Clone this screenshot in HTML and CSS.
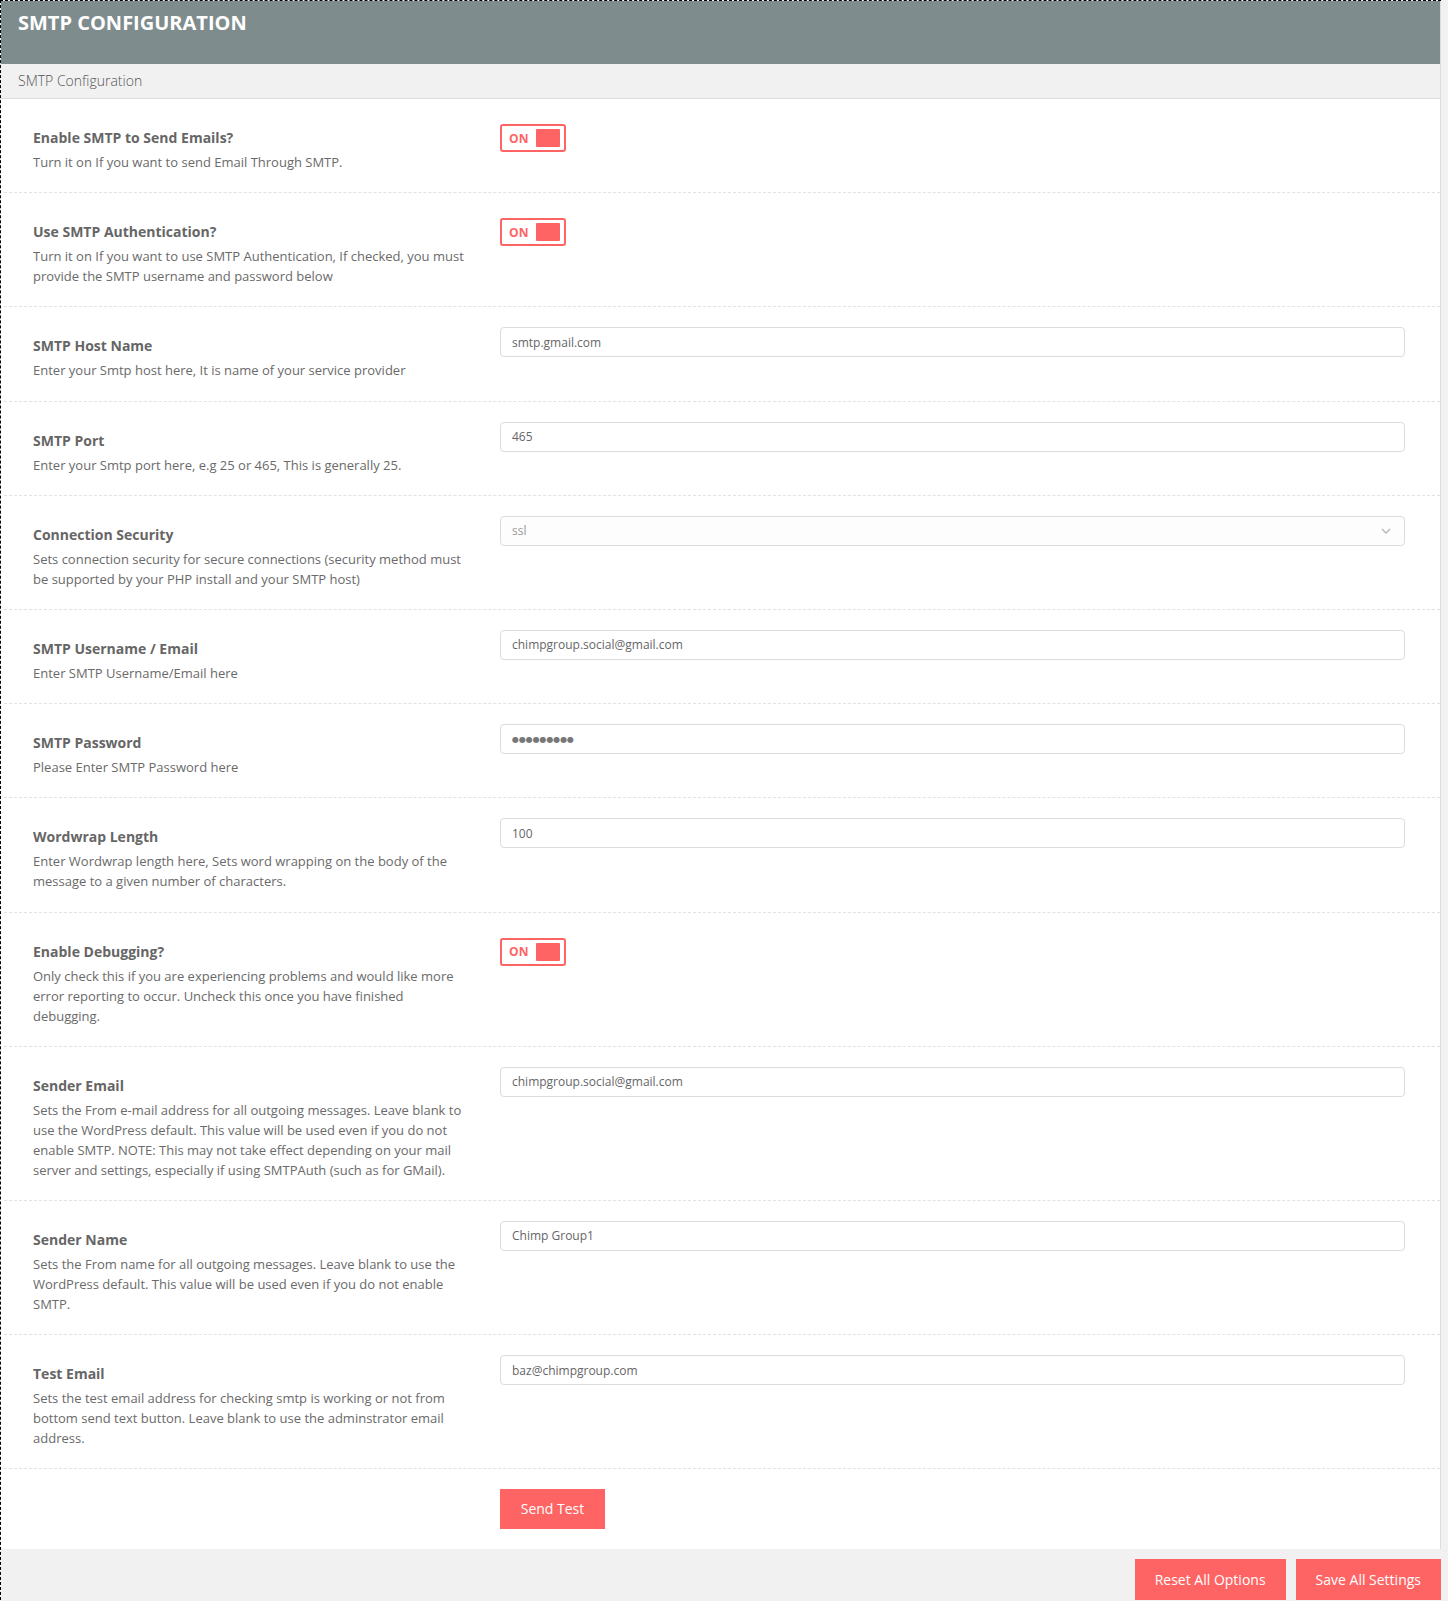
FILE: index.html
```html
<!DOCTYPE html>
<html lang="en">
<head>
<meta charset="utf-8">
<title>SMTP Configuration</title>
<link rel="stylesheet" href="styles.css">
</head>
<body>
<div class="wrap">
  <div class="panel">
    <div class="panel-header"><h1 class="panel-title">SMTP CONFIGURATION</h1></div>
    <div class="panel-sub">SMTP Configuration</div>

    <div class="row">
      <div class="info">
        <div class="label">Enable SMTP to Send Emails?</div>
        <div class="desc">Turn it on If you want to send Email Through SMTP.</div>
      </div>
      <div class="field"><div class="toggle"><span class="toggle-text">ON</span><span class="knob"></span></div></div>
    </div>

    <div class="row">
      <div class="info">
        <div class="label">Use SMTP Authentication?</div>
        <div class="desc">Turn it on If you want to use SMTP Authentication, If checked, you must provide the SMTP username and password below</div>
      </div>
      <div class="field"><div class="toggle"><span class="toggle-text">ON</span><span class="knob"></span></div></div>
    </div>

    <div class="row">
      <div class="info">
        <div class="label">SMTP Host Name</div>
        <div class="desc">Enter your Smtp host here, It is name of your service provider</div>
      </div>
      <div class="field"><input class="text-input" type="text" value="smtp.gmail.com"></div>
    </div>

    <div class="row">
      <div class="info">
        <div class="label">SMTP Port</div>
        <div class="desc">Enter your Smtp port here, e.g 25 or 465, This is generally 25.</div>
      </div>
      <div class="field"><input class="text-input" type="text" value="465"></div>
    </div>

    <div class="row">
      <div class="info">
        <div class="label">Connection Security</div>
        <div class="desc">Sets connection security for secure connections (security method must be supported by your PHP install and your SMTP host)</div>
      </div>
      <div class="field">
        <div class="select-wrap">
          <select class="select-input"><option>ssl</option><option>tls</option><option>none</option></select>
          <svg class="chevron" width="10" height="6" viewBox="0 0 10 6"><polyline points="1,1 5,5 9,1" fill="none" stroke="#b5b5b5" stroke-width="1.3"/></svg>
        </div>
      </div>
    </div>

    <div class="row">
      <div class="info">
        <div class="label">SMTP Username / Email</div>
        <div class="desc">Enter SMTP Username/Email here</div>
      </div>
      <div class="field"><input class="text-input" type="text" value="chimpgroup.social@gmail.com"></div>
    </div>

    <div class="row">
      <div class="info">
        <div class="label">SMTP Password</div>
        <div class="desc">Please Enter SMTP Password here</div>
      </div>
      <div class="field"><input class="text-input pw" type="text" value="●●●●●●●●●"></div>
    </div>

    <div class="row">
      <div class="info">
        <div class="label">Wordwrap Length</div>
        <div class="desc">Enter Wordwrap length here, Sets word wrapping on the body of the message to a given number of characters.</div>
      </div>
      <div class="field"><input class="text-input" type="text" value="100"></div>
    </div>

    <div class="row">
      <div class="info">
        <div class="label">Enable Debugging?</div>
        <div class="desc">Only check this if you are experiencing problems and would like more error reporting to occur. Uncheck this once you have finished debugging.</div>
      </div>
      <div class="field"><div class="toggle"><span class="toggle-text">ON</span><span class="knob"></span></div></div>
    </div>

    <div class="row">
      <div class="info">
        <div class="label">Sender Email</div>
        <div class="desc">Sets the From e-mail address for all outgoing messages. Leave blank to use the WordPress default. This value will be used even if you do not enable SMTP. NOTE: This may not take effect depending on your mail server and settings, especially if using SMTPAuth (such as for GMail).</div>
      </div>
      <div class="field"><input class="text-input" type="text" value="chimpgroup.social@gmail.com"></div>
    </div>

    <div class="row">
      <div class="info">
        <div class="label">Sender Name</div>
        <div class="desc">Sets the From name for all outgoing messages. Leave blank to use the WordPress default. This value will be used even if you do not enable SMTP.</div>
      </div>
      <div class="field"><input class="text-input" type="text" value="Chimp Group1"></div>
    </div>

    <div class="row">
      <div class="info">
        <div class="label">Test Email</div>
        <div class="desc">Sets the test email address for checking smtp is working or not from bottom send text button. Leave blank to use the adminstrator email address.</div>
      </div>
      <div class="field"><input class="text-input" type="text" value="baz@chimpgroup.com"></div>
    </div>

    <div class="row row-last">
      <div class="info"></div>
      <div class="field"><button class="btn btn-test" type="button">Send Test</button></div>
    </div>
  </div>

  <div class="footer">
    <button class="btn btn-foot" type="button">Reset All Options</button>
    <button class="btn btn-foot" type="button">Save All Settings</button>
  </div>
</div>
</body>
</html>
```

FILE: styles.css
```css
html, body {
  margin: 0;
  padding: 0;
}
body {
  background: #f1f1f1;
  font-family: "Open Sans", "Liberation Sans", sans-serif;
  color: #666;
}
.wrap {
  width: 1440px;
  border-top: 1px dashed #000;
  border-left: 1px dashed #000;
}
.panel {
  background: #fff;
  border-right: 1px solid #ddd;
}
.panel-header {
  background: #7f8c8d;
  height: 63px;
  padding: 0 17px;
  box-sizing: border-box;
}
.panel-title {
  margin: 0;
  padding-top: 10px;
  font-size: 20px;
  line-height: 24px;
  font-weight: 700;
  color: #fff;
}
.panel-sub {
  background: #f1f1f1;
  height: 34px;
  line-height: 34px;
  border-bottom: 1px solid #ddd;
  padding: 0 17px;
  font-size: 14px;
  font-weight: 300;
  color: #555;
}
.row {
  display: grid;
  grid-template-columns: 438px 1fr;
  column-gap: 29px;
  padding: 20px 35px 20.2px 29px;
  margin-left: 3px;
  border-bottom: 1px dashed #e2e2e2;
}
.row-last {
  border-bottom: none;
  padding-top: 19.5px;
}
.info {
  padding-top: 9px;
}
.label {
  font-size: 14px;
  line-height: 20px;
  font-weight: 700;
  color: #666;
}
.desc {
  margin-top: 4px;
  font-size: 13px;
  line-height: 20px;
  color: #6a6a6a;
}
.toggle {
  margin-top: 5px;
  width: 66px;
  height: 28px;
  box-sizing: border-box;
  border: 2px solid #ff6464;
  border-radius: 3px;
  display: flex;
  align-items: center;
  justify-content: space-between;
  padding: 0 4px 0 7px;
}
.toggle-text {
  font-size: 12px;
  font-weight: 700;
  color: #ff6464;
  letter-spacing: 0.3px;
}
.knob {
  width: 24px;
  height: 18px;
  background: #ff6464;
  border-radius: 1px;
}
.text-input,
.select-input {
  display: block;
  width: 100%;
  height: 30px;
  box-sizing: border-box;
  margin: 0;
  border: 1px solid #dcdcdc;
  border-radius: 4px;
  padding: 0 11px;
  font-family: "Open Sans", "Liberation Sans", sans-serif;
  font-size: 12px;
  color: #666;
  background: #fff;
  outline: none;
}
.text-input.pw {
  font-family: "DejaVu Sans", sans-serif;
  font-size: 8px;
  letter-spacing: -0.1px;
  color: #777;
}
.select-wrap {
  position: relative;
}
.select-input {
  -webkit-appearance: none;
  appearance: none;
  color: #999;
  background: #fdfdfd;
}
.chevron {
  position: absolute;
  right: 14px;
  top: 12px;
}
.btn {
  border: none;
  margin: 0;
  background: #ff6464;
  color: #fff;
  font-family: "Open Sans", "Liberation Sans", sans-serif;
  font-size: 14px;
  height: 40px;
  cursor: pointer;
}
.btn-test {
  width: 105px;
  padding: 0;
}
.footer {
  display: flex;
  justify-content: flex-end;
  gap: 10px;
  padding: 10px 0 10px;
  background: #f1f1f1;
}
.btn-foot {
  height: 41px;
  padding: 0 20px;
}
```
